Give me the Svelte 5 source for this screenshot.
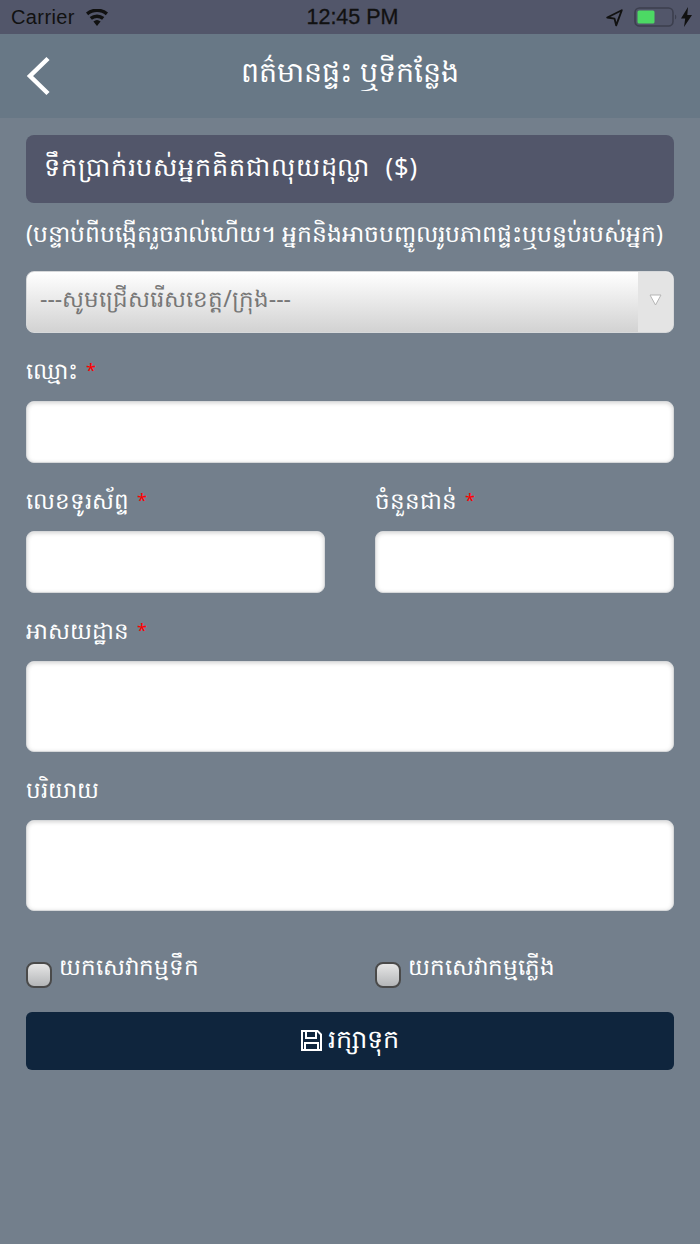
<script>
  let water = false;
  let power = false;
</script>

<style>
  :global(body) {
    margin: 0;
    background: #737f8c;
  }

  .page {
    width: 700px;
    height: 1244px;
    background: #737f8c;
    font-family: "Noto Sans", "Liberation Sans", sans-serif;
    color: #fff;
    overflow: hidden;
  }

  .status {
    height: 34px;
    background: #52566a;
    display: flex;
    align-items: center;
    justify-content: space-between;
    padding: 0 8px 0 11px;
    color: #111;
    font-family: "Liberation Sans", sans-serif;
    position: relative;
  }

  .carrier {
    display: flex;
    align-items: center;
    gap: 10px;
    font-size: 20px;
    letter-spacing: 0.4px;
  }

  .time {
    position: absolute;
    left: 5px;
    right: 0;
    text-align: center;
    font-size: 21.5px;
    line-height: 34px;
    -webkit-text-stroke: 0.3px #111;
  }

  .right {
    display: flex;
    align-items: center;
    gap: 3px;
  }

  .header {
    height: 84px;
    background: #687886;
    position: relative;
    display: flex;
    justify-content: center;
    padding-top: 15px;
    box-sizing: border-box;
    font-size: 28.5px;
    line-height: 44px;
  }

  .back {
    position: absolute;
    left: 26px;
    top: 22px;
  }

  .form {
    padding: 17px 26px 0;
    display: flex;
    flex-direction: column;
  }

  .banner {
    height: 68px;
    box-sizing: border-box;
    background: #52566a;
    border-radius: 8px;
    padding: 0 18px;
    font-size: 25.5px;
    line-height: 62px;
    letter-spacing: 0.9px;
    white-space: pre;
  }

  .note {
    height: 68px;
    font-size: 23.4px;
    line-height: 60px;
    white-space: nowrap;
  }

  .select {
    height: 62px;
    box-sizing: border-box;
    border: 1px solid #d6d8da;
    border-radius: 8px;
    background: linear-gradient(#ffffff, #d2d2d2);
    display: flex;
    justify-content: space-between;
    overflow: hidden;
    color: #777;
    font-size: 23px;
    line-height: 52px;
    padding-left: 13px;
  }

  .arrow {
    width: 35px;
    background: #e4e4e4;
    display: flex;
    align-items: center;
    justify-content: center;
    padding-bottom: 4px;
    box-sizing: border-box;
  }

  label, .label {
    display: block;
    height: 68px;
    box-sizing: border-box;
    font-size: 23px;
    line-height: 36px;
    padding-top: 19px;
  }

  .star {
    color: #f00;
    font-size: 18px;
    margin-left: 2px;
    position: relative;
    top: -2px;
  }

  .input {
    height: 62px;
    box-sizing: border-box;
    background: #fff;
    border: 1px solid #d6d8da;
    border-radius: 8px;
    box-shadow: inset 0 1px 4px rgba(0, 0, 0, 0.18);
  }

  .tall {
    height: 91px;
  }

  .cols {
    display: grid;
    grid-template-columns: 299px 299px;
    column-gap: 50px;
  }

  .checks {
    display: grid;
    grid-template-columns: 299px 299px;
    column-gap: 50px;
    margin-top: 39px;
    height: 62px;
  }

  .check {
    display: flex;
    gap: 7px;
    font-size: 23px;
    line-height: 32px;
    height: auto;
    padding: 0;
  }

  .box {
    width: 26px;
    height: 26px;
    box-sizing: border-box;
    margin-top: 12px;
    border: 2px solid #4a4a4a;
    border-radius: 8px;
    background: linear-gradient(#e6e6e6, #b4b6b8);
    flex: none;
  }

  .save {
    height: 58px;
    background: #0f253d;
    border-radius: 6px;
    display: flex;
    align-items: center;
    justify-content: center;
    gap: 6px;
    font-size: 25.5px;
    padding-bottom: 2px;
    box-sizing: border-box;
  }
</style>

<div class="page">
  <div class="status">
    <div class="carrier">
      <span>Carrier</span>
      <svg width="24" height="17" viewBox="0 0 24 17" fill="#111">
        <path d="M12 17l-3.6-4.4a5.6 5.6 0 0 1 7.2 0z" />
        <path d="M6.9 10.8L4.7 8.1a11.4 11.4 0 0 1 14.6 0l-2.2 2.7a8 8 0 0 0-10.2 0z" />
        <path d="M3.2 6.3L1 3.6a17 17 0 0 1 22 0l-2.2 2.7a13.6 13.6 0 0 0-17.6 0z" />
      </svg>
    </div>
    <div class="time">12:45 PM</div>
    <div class="right">
      <svg width="19" height="19" viewBox="0 0 17 17" fill="none" stroke="#111" stroke-width="1.7" stroke-linejoin="round" style="margin-right:7px">
        <path d="M15 2L2 8.5l6.5 1 1.5 6z" />
      </svg>
      <svg width="44" height="20" viewBox="0 0 44 20">
        <rect x="1" y="1" width="38" height="18" rx="4.5" fill="none" stroke="#3c3f4e" stroke-width="1.6" />
        <rect x="3.5" y="3.5" width="17" height="13" rx="1.5" fill="#4cd964" />
        <path d="M41 7.5a3 3 0 0 1 0 5z" fill="#3c3f4e" />
      </svg>
      <svg width="11" height="20" viewBox="0 0 11 20" fill="#111">
        <path d="M7 0L0 11.5h4.2L3 20l8-12H6.3z" />
      </svg>
    </div>
  </div>

  <div class="header">
    <svg class="back" width="25" height="40" viewBox="0 0 25 40" fill="none" stroke="#fff" stroke-width="4.5">
      <path d="M22 2.5L4 20l18 17.5" />
    </svg>
    <span>ពត៌មានផ្ទះ ឬទីកន្លែង</span>
  </div>

  <div class="form">
    <div class="banner">ទឹកប្រាក់របស់អ្នកគិតជាលុយដុល្លា  ($)</div>
    <div class="note">(បន្ទាប់ពីបង្កើតរួចរាល់ហើយ។ អ្នកនិងអាចបញ្ចូលរូបភាពផ្ទះឬបន្ទប់របស់អ្នក)</div>

    <div class="select">
      <span>---សូមជ្រើសរើសខេត្ត/ក្រុង---</span>
      <div class="arrow">
        <svg width="13" height="12" viewBox="0 0 13 12" fill="#fff" stroke="#b5b5b5">
          <path d="M1 1h11L6.5 11z" />
        </svg>
      </div>
    </div>

    <div class="label">ឈ្មោះ <span class="star">*</span></div>
    <div class="input"></div>

    <div class="cols">
      <div>
        <div class="label">លេខទូរស័ព្ទ <span class="star">*</span></div>
        <div class="input"></div>
      </div>
      <div>
        <div class="label">ចំនួនជាន់ <span class="star">*</span></div>
        <div class="input"></div>
      </div>
    </div>

    <div class="label">អាសយដ្ឋាន <span class="star">*</span></div>
    <div class="input tall"></div>

    <div class="label">បរិយាយ</div>
    <div class="input tall"></div>

    <div class="checks">
      <label class="check">
        <span class="box" class:on={water}></span>
        <span>យកសេវាកម្មទឹក</span>
      </label>
      <label class="check">
        <span class="box" class:on={power}></span>
        <span>យកសេវាកម្មភ្លើង</span>
      </label>
    </div>

    <div class="save">
      <svg width="21" height="21" viewBox="0 0 21 21" fill="none" stroke="#fff" stroke-width="2">
        <path d="M1 1h15.5L20 4.5V20H1z" />
        <path d="M5 1v7h10V1M4 20v-7h13v7" />
      </svg>
      <span>រក្សាទុក</span>
    </div>
  </div>
</div>
